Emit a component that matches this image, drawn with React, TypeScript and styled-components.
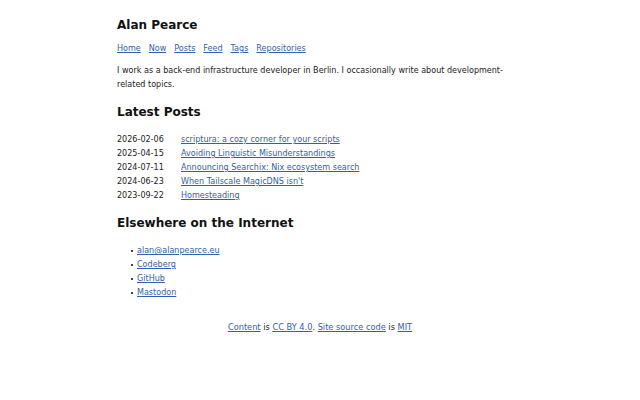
import { Fragment } from "react";
import { createGlobalStyle, styled } from "styled-components";

const GlobalStyle = createGlobalStyle`
  html, body {
    margin: 0;
    padding: 0;
    background: #ffffff;
  }
  body {
    font-family: "DejaVu Sans", Verdana, sans-serif;
    font-size: 8.05px;
    line-height: 14px;
    color: #222222;
  }
`;

const Page = styled.div`
  width: 406px;
  margin: 0 auto;
  padding-top: 17px;
`;

const SiteTitle = styled.h1`
  font-size: 12px;
  line-height: 16px;
  font-weight: 700;
  margin: 0 0 9px;
  color: #111111;
`;

const Nav = styled.nav`
  display: flex;
  gap: 8px;
  margin-bottom: 8px;
`;

const Link = styled.a`
  color: #3260a8;
  text-decoration: underline;
  text-underline-offset: 1px;
`;

const Intro = styled.p`
  margin: 0 0 12px;
`;

const SectionTitle = styled.h2`
  font-size: 12px;
  line-height: 16px;
  font-weight: 700;
  margin: 0 0 13px;
  color: #111111;
`;

const PostList = styled.div`
  display: grid;
  grid-template-columns: 64px 1fr;
  margin-bottom: 12px;
`;

const PostDate = styled.span`
  color: #222222;
`;

const LinkList = styled.ul`
  margin: 0 0 20px;
  padding-left: 20px;
  list-style: none;
`;

const LinkItem = styled.li`
  position: relative;

  &::before {
    content: "";
    position: absolute;
    left: -6px;
    top: 6px;
    width: 2px;
    height: 2px;
    background: #444444;
  }
`;

const Footer = styled.footer`
  text-align: center;
  font-size: 8.22px;
`;

interface Post {
  date: string;
  title: string;
}

const posts: Post[] = [
  { date: "2026-02-06", title: "scriptura: a cozy corner for your scripts" },
  { date: "2025-04-15", title: "Avoiding Linguistic Misunderstandings" },
  { date: "2024-07-11", title: "Announcing Searchix: Nix ecosystem search" },
  { date: "2024-06-23", title: "When Tailscale MagicDNS isn't" },
  { date: "2023-09-22", title: "Homesteading" },
];

const navItems = ["Home", "Now", "Posts", "Feed", "Tags", "Repositories"];

const elsewhere = ["alan@alanpearce.eu", "Codeberg", "GitHub", "Mastodon"];

export default function App() {
  return (
    <>
      <GlobalStyle />
      <Page>
        <SiteTitle>Alan Pearce</SiteTitle>
        <Nav>
          {navItems.map((item) => (
            <Link key={item} href="#">
              {item}
            </Link>
          ))}
        </Nav>
        <Intro>
          I work as a back-end infrastructure developer in Berlin. I occasionally
          write about development-related topics.
        </Intro>
        <SectionTitle>Latest Posts</SectionTitle>
        <PostList>
          {posts.map((post) => (
            <Fragment key={post.date}>
              <PostDate>{post.date}</PostDate>
              <Link href="#">{post.title}</Link>
            </Fragment>
          ))}
        </PostList>
        <SectionTitle>Elsewhere on the Internet</SectionTitle>
        <LinkList>
          {elsewhere.map((item) => (
            <LinkItem key={item}>
              <Link href="#">{item}</Link>
            </LinkItem>
          ))}
        </LinkList>
        <Footer>
          <Link href="#">Content</Link> is <Link href="#">CC BY 4.0</Link>.{" "}
          <Link href="#">Site source code</Link> is <Link href="#">MIT</Link>
        </Footer>
      </Page>
    </>
  );
}
